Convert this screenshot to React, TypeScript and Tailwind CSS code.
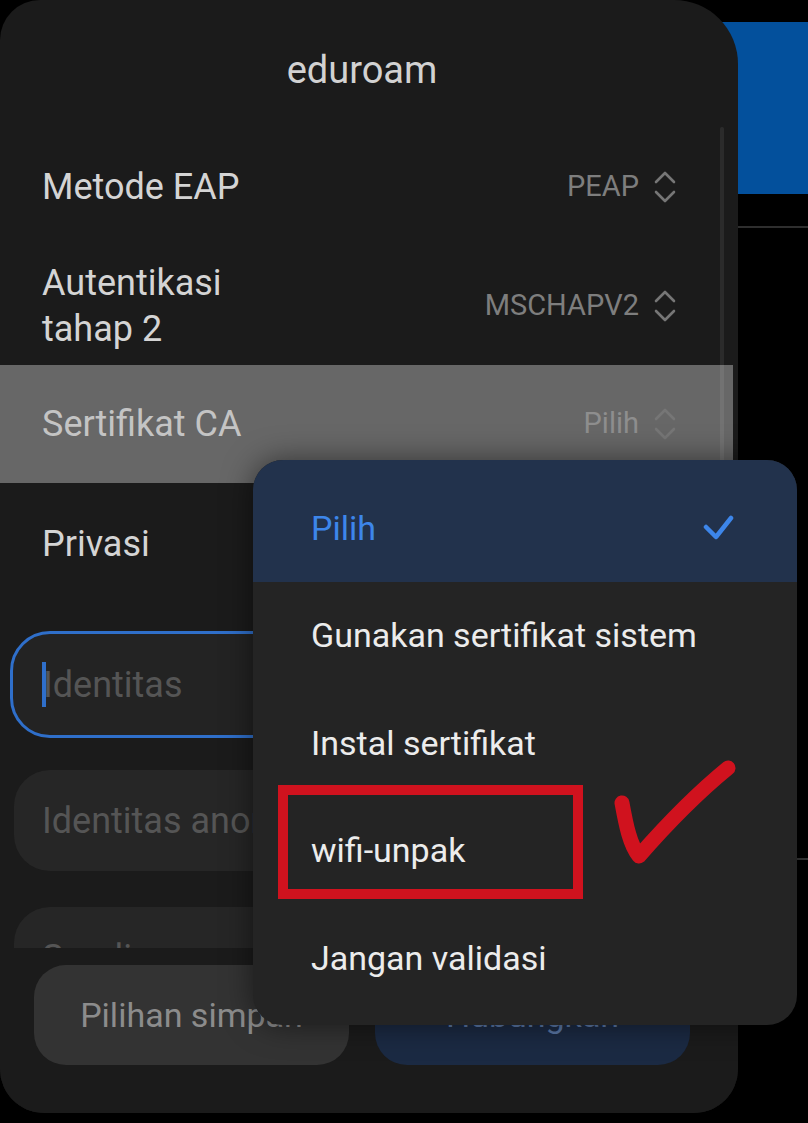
import type { ReactNode } from 'react'

const font = { fontFamily: 'Roboto, "Noto Sans", sans-serif' }

function UpDown() {
  return (
    <svg width="24" height="36" viewBox="0 0 24 36" fill="none" stroke="#767676" strokeWidth="2.6" strokeLinecap="round" strokeLinejoin="round">
      <path d="M3 13 L12 4 L21 13" />
      <path d="M3 23 L12 32 L21 23" />
    </svg>
  )
}

type RowProps = {
  label: ReactNode
  value: string
  className: string
  highlight?: boolean
}

function SettingRow({ label, value, className, highlight }: RowProps) {
  return (
    <div className={`flex items-center justify-between pl-[42px] pr-[56px] ${className}`}>
      <div className={`text-[36px] leading-[46px] ${highlight ? 'text-[#c4c4c4]' : 'text-[#d4d4d4]'}`}>{label}</div>
      <div className="flex items-center gap-[14px]">
        <span className={`text-[29px] ${highlight ? 'text-[#8e8e8e]' : 'text-[#7e7e7e]'}`}>{value}</span>
        <UpDown />
      </div>
    </div>
  )
}

const options = ['Gunakan sertifikat sistem', 'Instal sertifikat', 'wifi-unpak', 'Jangan validasi']

export default function App() {
  return (
    <div className="relative flex h-[1123px] w-[808px] overflow-hidden bg-black" style={font}>
      {/* dialog sheet */}
      <div className="relative z-10 flex h-[1113px] w-[738px] shrink-0 flex-col overflow-hidden rounded-tl-[40px] rounded-tr-[64px] rounded-b-[44px] bg-[#1b1b1b]">
        <div className="h-[127px] shrink-0 pr-[14px] pt-[46px] text-center text-[38px] leading-[48px] text-[#d2d2d2]">eduroam</div>

        <div className="relative h-[821px] shrink-0 overflow-hidden">
          <div className="w-[733px]">
            <SettingRow label="Metode EAP" value="PEAP" className="h-[120px]" />
            <SettingRow
              label={
                <>
                  Autentikasi
                  <br />
                  tahap 2
                </>
              }
              value="MSCHAPV2"
              className="h-[118px]"
            />
            <SettingRow label="Sertifikat CA" value="Pilih" className="h-[118px] bg-[#676767]" highlight />
            <div className="flex h-[122px] items-center pl-[42px] text-[36px] text-[#d4d4d4]">Privasi</div>
          </div>

          <div className="mx-[10px] mt-[26px] flex h-[107px] items-center rounded-[40px] border-[3px] border-[#2f6fca] bg-[#232323] pl-[29px]">
            <span className="relative z-10 h-[45px] w-[4px] bg-[#2f6fca]" />
            <span className="-ml-[3px] text-[36px] text-[#555555]">Identitas</span>
          </div>
          <div className="mx-[14px] mt-[32px] flex h-[101px] items-center rounded-[36px] bg-[#262626] pl-[28px] text-[36px] text-[#555555]">
            Identitas anonim
          </div>
          <div className="mx-[14px] mt-[36px] flex h-[101px] items-center rounded-[36px] bg-[#262626] pl-[28px] text-[36px] text-[#555555]">
            Sandi
          </div>

          {/* scrollbar */}
          <div className="absolute left-[720px] top-0 h-[620px] w-[4px] rounded-full bg-white/[0.07]" />
        </div>

        <div className="flex h-[165px] shrink-0 gap-[26px] bg-[#1b1b1b] px-[34px] pt-[17px]">
          <button type="button" className="flex h-[100px] w-[315px] items-center justify-center rounded-[32px] bg-[#333333] text-[34px] text-[#8c8c8c]">
            Pilihan simpan
          </button>
          <button type="button" className="flex h-[100px] w-[315px] items-center justify-center rounded-[32px] bg-[#1b2a43] text-[34px] text-[#5a77a5]">
            Hubungkan
          </button>
        </div>
      </div>

      {/* screen behind the sheet */}
      <div className="-ml-[20px] flex flex-1 flex-col pt-[22px]">
        <div className="h-[172px] bg-[#03509c]" />
        <div className="ml-[20px] mt-[32px] h-[2px] bg-[#2e2e2e]" />
        <div className="ml-[77px] mt-[630px] h-[2px] bg-[#3a3a3a]" />
      </div>

      {/* certificate dropdown */}
      <div className="absolute left-[253px] top-[460px] z-20 flex h-[565px] w-[544px] flex-col overflow-hidden rounded-[30px] bg-[#242424] shadow-[0_0_30px_rgba(0,0,0,0.5)]">
        <div className="flex h-[122px] shrink-0 items-center justify-between bg-[#22324c] pl-[58px] pr-[62px] pt-[14px]">
          <span className="text-[34px] text-[#3d86ea]">Pilih</span>
          <svg width="32" height="28" viewBox="0 0 32 28" fill="none" stroke="#3d86ea" strokeWidth="4.5" strokeLinecap="round" strokeLinejoin="round">
            <path d="M3 13 L13 23 L28 4" />
          </svg>
        </div>
        {options.map((o) => (
          <div key={o} className="flex h-[107.5px] shrink-0 items-center pl-[58px] text-[34px] text-[#ececec]">
            {o}
          </div>
        ))}
      </div>

      {/* red annotation */}
      <div className="absolute left-[278px] top-[785px] z-30 h-[114px] w-[305px] border-[10px] border-[#d0121e]" />
      <svg className="absolute left-[600px] top-[750px] z-30" width="150" height="130" viewBox="0 0 150 130" fill="none" stroke="#d0121e" strokeWidth="15" strokeLinecap="round" strokeLinejoin="round">
        <path d="M22 53 C26 75 30 95 39 106 C60 82 95 45 128 18" />
      </svg>
    </div>
  )
}
